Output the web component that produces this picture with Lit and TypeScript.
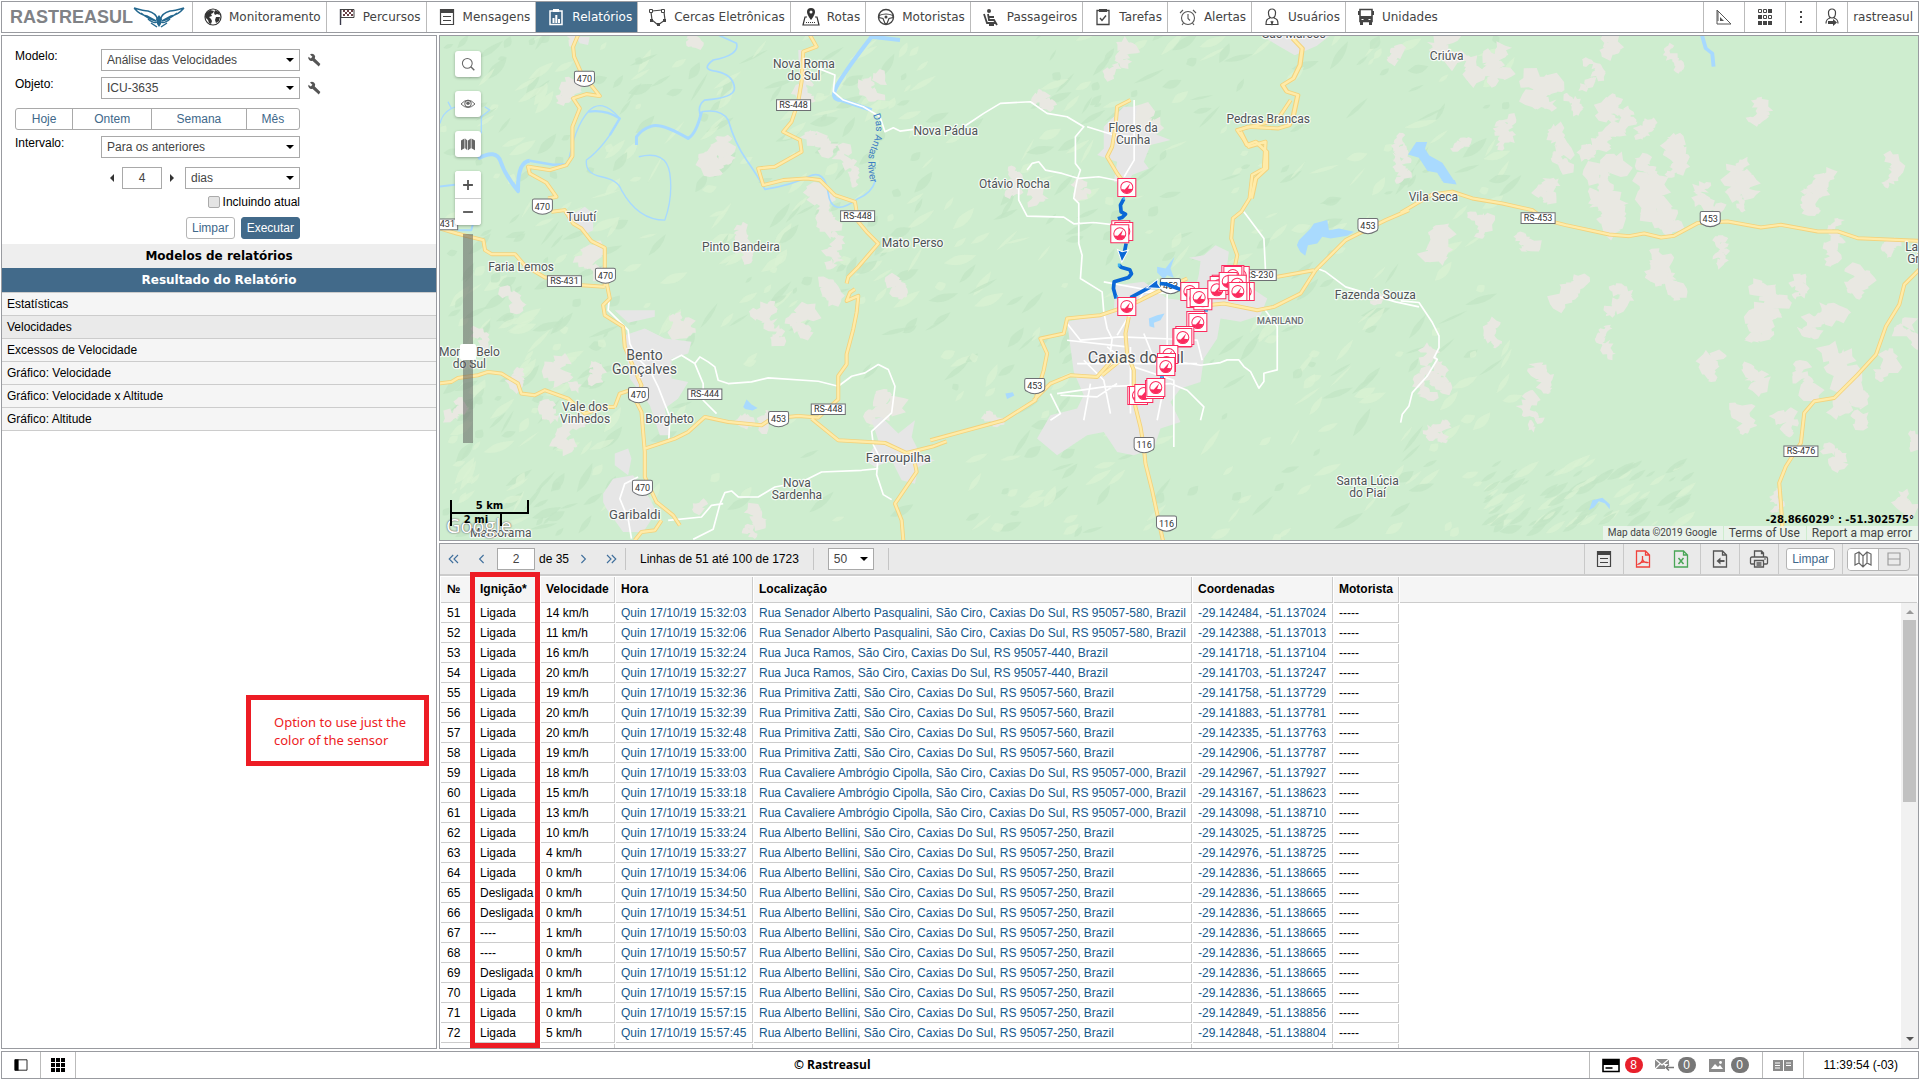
import { LitElement, html, svg, css } from "lit";
import { customElement } from "lit/decorators.js";

/* ---------- data ---------- */

const NAV: [string, string][] = [
  ["globe", "Monitoramento"],
  ["flag", "Percursos"],
  ["list", "Mensagens"],
  ["report", "Relatórios"],
  ["fence", "Cercas Eletrônicas"],
  ["route", "Rotas"],
  ["wheel", "Motoristas"],
  ["seat", "Passageiros"],
  ["task", "Tarefas"],
  ["alarm", "Alertas"],
  ["user", "Usuários"],
  ["bus", "Unidades"],
];

const SENADOR = "Rua Senador Alberto Pasqualini, São Ciro, Caxias Do Sul, RS 95057-580, Brazil";
const JUCA = "Rua Juca Ramos, São Ciro, Caxias Do Sul, RS 95057-440, Brazil";
const ZATTI = "Rua Primitiva Zatti, São Ciro, Caxias Do Sul, RS 95057-560, Brazil";
const CIPOLLA = "Rua Cavaliere Ambrógio Cipolla, São Ciro, Caxias Do Sul, RS 95057-000, Brazil";
const BELLINI = "Rua Alberto Bellini, São Ciro, Caxias Do Sul, RS 95057-250, Brazil";

const ROWS: [number, string, number, string, string, string][] = [
  [51, "Ligada", 14, "15:32:03", SENADOR, "-29.142484, -51.137024"],
  [52, "Ligada", 11, "15:32:06", SENADOR, "-29.142388, -51.137013"],
  [53, "Ligada", 16, "15:32:24", JUCA, "-29.141718, -51.137104"],
  [54, "Ligada", 20, "15:32:27", JUCA, "-29.141703, -51.137247"],
  [55, "Ligada", 19, "15:32:36", ZATTI, "-29.141758, -51.137729"],
  [56, "Ligada", 20, "15:32:39", ZATTI, "-29.141883, -51.137781"],
  [57, "Ligada", 20, "15:32:48", ZATTI, "-29.142335, -51.137763"],
  [58, "Ligada", 19, "15:33:00", ZATTI, "-29.142906, -51.137787"],
  [59, "Ligada", 18, "15:33:03", CIPOLLA, "-29.142967, -51.137927"],
  [60, "Ligada", 15, "15:33:18", CIPOLLA, "-29.143167, -51.138623"],
  [61, "Ligada", 13, "15:33:21", CIPOLLA, "-29.143098, -51.138710"],
  [62, "Ligada", 10, "15:33:24", BELLINI, "-29.143025, -51.138725"],
  [63, "Ligada", 4, "15:33:27", BELLINI, "-29.142976, -51.138725"],
  [64, "Ligada", 0, "15:34:06", BELLINI, "-29.142836, -51.138665"],
  [65, "Desligada", 0, "15:34:50", BELLINI, "-29.142836, -51.138665"],
  [66, "Desligada", 0, "15:34:51", BELLINI, "-29.142836, -51.138665"],
  [67, "----", 1, "15:50:03", BELLINI, "-29.142836, -51.138665"],
  [68, "----", 0, "15:50:57", BELLINI, "-29.142836, -51.138665"],
  [69, "Desligada", 0, "15:51:12", BELLINI, "-29.142836, -51.138665"],
  [70, "Ligada", 1, "15:57:15", BELLINI, "-29.142836, -51.138665"],
  [71, "Ligada", 0, "15:57:15", BELLINI, "-29.142849, -51.138856"],
  [72, "Ligada", 5, "15:57:45", BELLINI, "-29.142848, -51.138804"],
];

const SECTIONS = [
  "Estatísticas",
  "Velocidades",
  "Excessos de Velocidade",
  "Gráfico: Velocidade",
  "Gráfico: Velocidade x Altitude",
  "Gráfico: Altitude",
];

/* ---------- icons ---------- */

const GLYPHS: Record<string, unknown> = {
  globe: svg`<circle cx="10" cy="10" r="8" fill="none" stroke="#333" stroke-width="1.2"/><path d="M3 6l4-3 4 1-1 2-2 1 1 2-3 1 2 2 1 2-1 3-2-1-1-3-3-3zM12 3l4 2 1 3-3-1-2 1-1-2zM13 10l4 0-1 4-3 2-1-3z" fill="#333"/>`,
  flag: svg`<path d="M3.500 2v16" stroke="#3a3a4a" stroke-width="1.400"/><path d="M4 2.500h13v8H4z" fill="#fff" stroke="#444"/><path d="M6 3h2v2H6zM10 3h2v2h-2zM14 3h2v2h-2zM8 5h2v2H8zM12 5h2v2h-2zM6 7h2v2H6zM10 7h2v2h-2zM14 7h2v2h-2z" fill="#6a4046"/>`,
  list: svg`<path d="M3.500 2.500h13v15h-13z" fill="none" stroke="#444" stroke-width="1.200"/><path d="M3 2h14v4H3z" fill="#444"/><path d="M6 9.500h8M6 13.500h8" stroke="#444" stroke-width="1.200"/>`,
  report: svg`<path d="M4 4h12v13.500H4z" fill="none" stroke="#fff" stroke-width="1.500"/><path d="M7 2h6v3H7z" fill="#fff"/><path d="M6.500 11h2v5h-2zM9.300 8h2v8h-2zM12 12h2v4h-2z" fill="#fff"/>`,
  fence: svg`<path d="M4 4l10-1M16 5l1 8-7 5-6-5-1-8" fill="none" stroke="#444" stroke-width="1.200"/><path d="M1.500 2.500h3v3h-3zM13.500 2.500h3v3h-3z" fill="#fff" stroke="#444"/><path d="M2 12h3v3H2zM15 12h3v3h-3zM9 16h3v3H9z" fill="#444"/>`,
  route: svg`<path d="M6 10H4l-2 8h16l-2-8h-2" fill="none" stroke="#333" stroke-width="1.200"/><path d="M10 1a4 4 0 0 1 4 4c0 3-4 8-4 8s-4-5-4-8a4 4 0 0 1 4-4z" fill="#333"/><circle cx="10" cy="5" r="1.500" fill="#fff"/><path d="M5 15.500h10" stroke="#333" stroke-dasharray="1 1"/>`,
  wheel: svg`<circle cx="10" cy="10" r="7.500" fill="none" stroke="#444" stroke-width="1.400"/><path d="M3 8.500q7-3 14 0v2l-4 1-2 5H9l-2-5-4-1z" fill="none" stroke="#444" stroke-width="1.200"/><circle cx="10" cy="10" r="1.500" fill="#444"/>`,
  seat: svg`<circle cx="8" cy="4" r="2" fill="#444"/><path d="M3 7l3 9h8M7 7l1 6h5l3 5M8 10l5 0M8 18h5" fill="none" stroke="#444" stroke-width="1.800"/>`,
  task: svg`<path d="M4 3.500h12v14H4z" fill="none" stroke="#444" stroke-width="1.300"/><path d="M6 2h8v3H6z" fill="#444"/><path d="M7 11l2 2.500 4-5" fill="none" stroke="#444" stroke-width="1.400"/>`,
  alarm: svg`<circle cx="10" cy="11" r="6.500" fill="none" stroke="#555" stroke-width="1.100"/><path d="M10 7v4.500l2 2M2 6l3-3M18 6l-3-3M5.500 16l-1.500 2M14.500 16l1.500 2" fill="none" stroke="#555" stroke-width="1.100"/>`,
  user: svg`<path d="M10 2a3.500 3.500 0 0 1 3.500 4c0 3-1.500 5-3.500 5S6.500 9 6.500 6A3.500 3.500 0 0 1 10 2zM8 11c-3 1-4 2-4 6.500h12c0-4.500-1-5.500-4-6.500M9 14l1 3 1-3" fill="none" stroke="#444" stroke-width="1.200"/>`,
  bus: svg`<path d="M4 2.500h12v12H4z" fill="#fff" stroke="#444" stroke-width="1.600"/><path d="M4 9h12v6H4z" fill="#444"/><path d="M4 15h3v3H4zM13 15h3v3h-3zM2 4h2v4H2zM16 4h2v4h-2z" fill="#444"/><path d="M5.500 12h2v1h-2zM12.500 12h2v1h-2z" fill="#fff"/>`,
  ruler: svg`<path d="M3 3v14h14z" fill="none" stroke="#555"/><path d="M6 10v4h4z" fill="#555"/><path d="M3 5h2M3 7h2M3 9h2M3 11h2M3 13h2" stroke="#555"/>`,
  apps: svg`<path d="M13 2h4v4h-4zM3 8h4v4H3zM3 14h4v4H3zM8 14h4v4H8zM13 14h4v4h-4z" fill="#444"/><path d="M3.500 2.500h3v3h-3zM8.500 2.500h3v3h-3zM8.500 8.500h3v3h-3zM13.500 8.500h3v3h-3z" fill="#fff" stroke="#444"/>`,
  dots: svg`<path d="M9 4h2v2H9zM9 9h2v2H9zM9 14h2v2H9z" fill="#444"/>`,
  login: svg`<path d="M10 2a3.500 3.500 0 0 1 3.500 4c0 3-1.500 5-3.500 5S6.500 9 6.500 6A3.500 3.500 0 0 1 10 2zM8 11c-3 1-4 2-4 5.500M12 11c3 1 4 2 4 5.500" fill="none" stroke="#444" stroke-width="1.200"/><path d="M6 14h5v-2l4 3.500-4 3.500v-2H6z" fill="#444"/>`,
  wrench: svg`<path d="M5 3a4 4 0 0 1 6 5l7 7-2 3-8-7a4 4 0 0 1-5-5l3 2 2-2z" fill="#555"/>`,
  search: svg`<circle cx="9" cy="9" r="7" fill="none" stroke="#666" stroke-width="1.500"/><path d="M14 14l5 5" stroke="#666" stroke-width="2"/>`,
  eye: svg`<path d="M0 10q10-11 20 0-10 10-20 0z" fill="none" stroke="#666" stroke-width="1.400"/><circle cx="10" cy="9.500" r="4.500" fill="none" stroke="#666" stroke-width="1.500"/><circle cx="10" cy="9" r="2.500" fill="#666"/>`,
  map: svg`<path d="M0 5l5-3v14l-5 3zM6 2l3 3v14l-3-3zM10 5l4-3v14l-4 3zM15 2l5 3v14l-5-3z" fill="#666"/>`,
  plus: svg`<path d="M10 3v14M3 10h14" stroke="#555" stroke-width="2.600"/>`,
  minus: svg`<path d="M3 10h14" stroke="#555" stroke-width="2.600"/>`,
  first: svg`<path d="M9 5l-5 5 5 5M15 5l-5 5 5 5" fill="none" stroke="#3f6f9c" stroke-width="1.400"/>`,
  prev: svg`<path d="M12 5l-5 5 5 5" fill="none" stroke="#3f6f9c" stroke-width="1.400"/>`,
  next: svg`<path d="M8 5l5 5-5 5" fill="none" stroke="#3f6f9c" stroke-width="1.400"/>`,
  last: svg`<path d="M5 5l5 5-5 5M11 5l5 5-5 5" fill="none" stroke="#3f6f9c" stroke-width="1.400"/>`,
  pdf: svg`<path d="M3.500 2h9l4 4v12h-13zM12.500 2v4h4" fill="none" stroke="#f0413c" stroke-width="1.300"/><path d="M9.500 7v3c0 2 3 4 5 3.500-3-1.500-6-.5-9 1.500 2 0 4-3 4-5" fill="none" stroke="#f0413c" stroke-width="1.300"/>`,
  excel: svg`<path d="M3.500 2h9l4 4v12h-13zM12.500 2v4h4" fill="none" stroke="#4aa657" stroke-width="1.300"/><path d="M7.500 9l5 6M12.500 9l-5 6" stroke="#4aa657" stroke-width="1.500"/>`,
  export: svg`<path d="M3.500 2h9l4 4v12h-13zM12.500 2v4h4" fill="none" stroke="#555" stroke-width="1.300"/><path d="M6.500 12l4-3.500v2.500h4v2h-4v2.500z" fill="#555"/>`,
  print: svg`<path d="M5.500 8V2h7l2 2v4M12.500 2v2.500h2M5 15H2.500q-1 0-1-1V9.500q0-1.500 1.500-1.500h14q1.500 0 1.500 1.500V14q0 1-1 1H15M5.500 11.500h9v6.500h-9zM7.500 14h5M7.500 16h5" fill="none" stroke="#555" stroke-width="1.300"/><path d="M15 9.500h2v1h-2z" fill="#555"/>`,
  mapline: svg`<path d="M2 5l4-2 4 4 4-4 4 2v11l-4-2-4 4-4-4-4 2zM6 3v11M10 7v11M14 3v11" fill="none" stroke="#666" stroke-width="1.200"/>`,
  split: svg`<path d="M2.500 2.500h15v15h-15zM2.500 10h15" fill="none" stroke="#999" stroke-width="1.400"/>`,
  panel: svg`<path d="M2.500 3.500h15v13h-15z" fill="#fff" stroke="#222" stroke-width="1.200"/><path d="M2 3h5v14H2z" fill="#000"/>`,
  grid: svg`<path d="M3 3h4v4H3zM8 3h4v4H8zM13 3h4v4h-4zM3 8h4v4H3zM8 8h4v4H8zM13 8h4v4h-4zM3 13h4v4H3zM8 13h4v4H8zM13 13h4v4h-4z" fill="#000"/>`,
  card: svg`<path d="M2 4.500h16v12H2z" fill="#fff" stroke="#000" stroke-width="1.600"/><path d="M2 4h16v6H2z" fill="#000"/><path d="M4.500 13h7" stroke="#000" stroke-width="1.600"/>`,
  mail: svg`<path d="M1 4h14v10H1z" fill="#8a8a8a"/><path d="M1 4l7 6 7-6M1 14l5-5M15 14l-5-5" fill="none" stroke="#fff" stroke-width="1.200"/><path d="M11 9h9v7h-9z" fill="#fff"/><path d="M20 12.500h-8M15 9.500l-3 3 3 3" fill="none" stroke="#777" stroke-width="1.500"/>`,
  image: svg`<path d="M2 4h16v13H2z" fill="#8a8a8a"/><path d="M4 14l4-5 3 3 2-2 3 4z" fill="#fff"/><circle cx="13.500" cy="7.500" r="1.400" fill="#fff"/>`,
  cols: svg`<path d="M0 5h10v11H0z" fill="#8a8a8a"/><path d="M11 5h9v11h-9z" fill="#8a8a8a"/><path d="M2 8h5M2 10.500h5M2 13h5M13 8h5M13 10.500h5" stroke="#fff"/>`,
};

const icon = (name: string, cls = "icon") =>
  html`<svg class=${cls} viewBox="0 0 20 20" aria-hidden="true">${GLYPHS[name]}</svg>`;

/* ---------- map drawing: one unit is a third of a pixel ---------- */

function random(seed: number) {
  let s = seed;
  return () => {
    s = (s * 1664525 + 1013904223) % 4294967296;
    return s / 4294967296;
  };
}

/* Ragged clearing around a centre given in window pixels: a chain of small
   irregular lobes that wander across the area. */
function patch(x: number, y: number, rx: number, ry: number, seed: number) {
  const next = random(seed * 7919 + 13);
  for (let i = 0; i < 5; i++) next();
  let d = "";
  const lobes = Math.max(4, Math.round((rx + ry) / 3.6));
  let ox = (next() - 0.5) * rx;
  let oy = -ry * 0.8;
  for (let j = 0; j < lobes; j++) {
    const n = 9;
    const size = 3 + next() * Math.min(rx, ry) * 0.38;
    for (let i = 0; i < n; i++) {
      const a = (i / n) * Math.PI * 2 + next() * 0.6;
      const k = size * (0.45 + next() * 1.05);
      const px = Math.round((x - 440 + ox + Math.cos(a) * k * 1.2) * 3);
      const py = Math.round((y - 36 + oy + Math.sin(a) * k) * 3);
      d += (i ? "L" : "M") + px + " " + py;
    }
    d += "Z";
    ox = Math.max(-rx, Math.min(rx, ox + (next() - 0.5) * size * 3.4));
    oy += (ry * 1.7) / lobes;
  }
  return d;
}

const CLEARINGS: number[][] = [
  [1450, 55, 22, 30], [1500, 65, 12, 20], [1527, 92, 28, 18], [1560, 105, 16, 10], [1600, 46, 20, 9], [1672, 60, 6, 16],
  [1590, 76, 8, 18], [1615, 108, 26, 14], [1628, 122, 18, 12], [1510, 135, 10, 18], [1460, 145, 16, 6], [1550, 148, 18, 22],
  [1605, 142, 22, 14], [1652, 130, 14, 10], [1680, 158, 16, 22], [1405, 165, 8, 22], [1610, 175, 18, 18], [1642, 170, 12, 14],
  [1740, 178, 16, 20], [1822, 184, 18, 12], [1885, 172, 10, 18], [1762, 112, 10, 14], [1450, 244, 18, 20], [1476, 225, 20, 12],
  [1522, 243, 18, 9], [1552, 192, 20, 12], [1588, 212, 24, 22], [1640, 205, 26, 28], [1662, 222, 18, 16], [1710, 200, 12, 18],
  [1745, 195, 12, 20], [1828, 200, 24, 14], [1838, 242, 9, 26], [1856, 284, 22, 14], [1892, 248, 18, 8], [1575, 292, 20, 14],
  [1604, 300, 20, 16], [1640, 266, 30, 14], [1662, 286, 14, 16], [1724, 252, 7, 18], [1760, 302, 22, 18], [1753, 326, 22, 18],
  [1800, 288, 10, 12], [1820, 322, 26, 16], [1818, 372, 30, 26], [1794, 380, 16, 18], [1726, 366, 18, 14], [1750, 380, 12, 16],
  [1495, 335, 14, 14], [1607, 342, 8, 18], [1535, 378, 11, 16], [1528, 414, 10, 20], [1440, 432, 18, 11], [1727, 420, 18, 16],
  [1855, 402, 24, 13], [1862, 420, 14, 8], [1790, 424, 16, 12], [1828, 456, 12, 14], [1888, 368, 12, 16], [1905, 335, 12, 14],
  [1907, 440, 10, 9], [1898, 504, 12, 12], [1779, 502, 5, 14], [1430, 380, 14, 12], [1378, 300, 8, 6], [1400, 150, 6, 16],
  [582, 38, 10, 8], [568, 92, 14, 12], [720, 155, 14, 20], [724, 165, 12, 8], [888, 88, 24, 14], [814, 144, 14, 12],
  [846, 168, 8, 22], [812, 210, 16, 24], [828, 245, 10, 26], [740, 246, 8, 22], [805, 92, 10, 12], [882, 288, 20, 10],
  [700, 40, 18, 6], [605, 262, 20, 16], [510, 302, 10, 12], [520, 378, 12, 10], [562, 374, 14, 18], [592, 374, 10, 12],
  [540, 412, 22, 10], [575, 434, 16, 18], [765, 324, 14, 22], [808, 322, 16, 16], [830, 292, 14, 12], [680, 325, 14, 12],
  [477, 343, 8, 14], [458, 410, 12, 12], [880, 406, 16, 16], [748, 524, 10, 16], [1006, 183, 12, 16], [1085, 190, 12, 10],
  [1043, 194, 14, 10], [1428, 365, 14, 20], [1420, 388, 8, 12], [1145, 125, 20, 18], [1120, 60, 12, 20], [1035, 102, 14, 8],
  [765, 421, 8, 10], [705, 508, 8, 6], [750, 422, 16, 6], [990, 420, 14, 6], [1400, 55, 12, 8],
];

/* Soft hill shading spread over the western two thirds. */
const RELIEF = (() => {
  const next = random(42);
  const out: { d: string; dark: boolean }[] = [];
  for (let i = 0; i < 820; i++) {
    const u = next();
    const x = Math.round(4431 * Math.pow(u, 1.25) * 0.72);
    const y = Math.round(next() * 1512);
    if (y > 900 && x > 500 && x < 1500 && next() < 0.8) continue;
    const l = 22 + next() * 80;
    const w = 8 + next() * 26;
    const a = -0.2 - next() * 0.9;
    const cx = Math.cos(a);
    const sy = Math.sin(a);
    const p = (m: number, n: number) => `${Math.round(x + cx * m - sy * n)} ${Math.round(y + sy * m + cx * n)}`;
    out.push({ d: `M${p(0, 0)}Q${p(l / 2, w)} ${p(l, 0)}Q${p(l / 2, -w / 2)} ${p(l / 3, -w / 3)}Z`, dark: next() > 0.5 });
  }
  for (let i = 0; i < 90; i++) {
    const x = Math.round(3120 + next() * 600);
    const y = Math.round(1290 + next() * 210);
    const l = 20 + next() * 60;
    out.push({ d: `M${x} ${y}q${Math.round(l / 3)} ${-Math.round(l / 2)} ${Math.round(l)} ${-Math.round(l / 1.5)}q${-Math.round(l / 3)} ${Math.round(l / 1.5)} ${-Math.round(l)} ${Math.round(l / 1.5)}z`, dark: next() > 0.45 });
  }
  return out;
})();

/* Map tiles share one drawing scale and differ by origin. */
const NW = "translate(-6 -18)";
const SW = "translate(-6 732)";
const MID = "translate(1470 192)";
const EAST = "translate(2880 432)";
const NE = "translate(2400 -108) scale(1.301 1)";

const RIVERS: [string, string, number][] = [
  [NW, "M6 280Q14 240 60 228M30 215l10 20M130 310V260l25-20-15-10M390 400Q410 290 450 245T545 265Q500 350 445 390Q440 430 490 440T550 480Q600 570 680 570Q705 500 695 430T602 380", 4],
  [NW, "M450 245q50-8 95 20l-30 50", 7],
  [NW, "M120 385Q175 355 188 395T240 483Q238 395 275 392", 12],
  [NW, "M275 392L345 404 390 402", 7],
  [NW, "M790 245Q850 235 870 270Q890 340 925 390T980 478Q1060 465 1110 440T1170 490T1260 505Q1300 490 1312 450", 5],
  [NW, "M595 345V320Q610 298 640 288T750 325Q775 310 790 245", 9],
  [NW, "M840 15l55 25q10 35-70 50-40 30 10 34 50 10 54 50 0 30-90 36-25 20-10 50", 5],
  [NW, "M1385 30l-85-10Q1230 110 1200 160T1210 210L1300 240", 12],
  [NW, "M0 470l50-6M60 600l40 0 5-20", 6],
  [NE, "M1062 100l10 45 15 15 3 40", 9],
];

const LAKES: [string, string][] = [
  [NE, "M405 426l25 0-5 20 10 20 30 22 15 30 18 35-30-5-15-30-22-5-20-40-25-10z"],
  [MID, "M1105 420l35-35 10-15 40-10 5 30 30-5 45 10-20 12-50 8-25-5-15 20-28 5-8 32-15-12-10-20z"],
  [MID, "M680 500l25 5 27-35-12 35 10 28-20-8-10 12-20-20zM655 655l25-10 22-5-12 20-20 8 2 15-15-5zM225 880l22-4 5 10-22 10z"],
  [SW, "M915 380l10-22 15 15 18 10-15 8-22-5z"],
  [EAST, "M575 960l30-8 22 20 0 15-15-18-18-6-14 18-15 8zM120 0l42 0 5 12-20-5z"],
];

const URBAN: [string, string][] = [
  [MID, "M410 665l140-30 5-80 85-10 70 50 75 8 20-80 5-40-35-10 45-8 35-30 40 20-5 40 60 60 60 40-20 50-60 20-60-10-10 60-40 60-10 70-60 20-30 40 30 60-60 20-20 60-60 20-50-10-40-60-50 10-90 60-60-50 40-70 80-20 20-40-30-70z"],
  [MID, "M520 80l60-60 40 0-10 60 60 20 50 20-60 15-20 50 15 20-50 20-15 30-40-10 10-60-60-20 20-20z"],
  [SW, "M495 640l30-45 60-10 30 40 20 30 20 40-40 60h-60l-50-70-10-20zM560 165l60-20 60 30 80 10-10 35-50 15 0 60 50 10-30 50-40 30 15 80-30 0-30-90-60-80zM530 90l120 0 0 20-80 18zM1280 540l40-60-20-60 30-10 50 50 50-40-10 50 30 60 40 10-50 20-10 50-40-10-30-60-50 20zM530 520l40-15 10 30-10 50-40-30z"],
  [NE, "M50 108l155 0-30 30-50 28-40-30z"],
  [NW, "M390 560l50-30 25 20 0 50-20 10-30-30zM415 20l40 0-5 25-25-5zM1080 60l20 0 5 140-20-20z"],
];

const WHITE: [string, string][] = [
  [MID, "M100 80l60-40 50-30 90-5 50 35 60 10 50 30-25 30 0 80 15 20-10 30-5 25-5 30 15 15 0 120 10 35-5 70 65 40 5 60 10 50 15 30-5 40M470 80l80 25 60 5M611 0v180l-30 50M265 250l0 50 25 48 110 3 30 20 60-4 70 8M290 210l15-20 20-5 20 25 50 10 50 15 60-5 60 12M520 545l190 35v200M410 670l40 50 120-10 120 5 110 5 15 60M560 705l80-130 80 5M710 780l100 15 60-8 20-8 35 0 15 20 20 15 25 50 15-20 0-25 40-10 0-130-40-55M460 780l60 60 20 100M480 850l-20 110M360 880l30 60-30 20M380 880l140-20 200-10 50 20 50 50-10 40M530 740l80 60 120 40 0 200M940 335l60 80 5 100M1160 505l25 10 60 45 150 45 70 15M410 720l180 20M600 740l0 200M700 860l-20 100M440 790l150 0 210 0M560 850l-60 40-110-5M640 700l60 150"],
  [SW, "M515 45l-5 45 60 60 5 40 20 40 40 40 25 50 35 90-3 70M700 240l30-15 40 25 25 60 0 50 40 40M770 250l15-20 25 15 20 15 10 40 30 10 70-5 50-12 150 10 60 15 40-30 40-10 40-25 30 15 20 50-10 80-60 55 5 40 15 30-5 60 20 60 25 15M1320 565l-50 5-120 5-60 30-80 15-50 30-60 0-20-18-20 5-15 35-20 75-60 30M690 720l100-10 30-35 35-5M600 590l-40 20-15 45 25 60 10 60"],
  [EAST, "M0 362l55 5 40 60 20 40 0 35-15 30 10 5-30 50-45 50-10 40-20 25-5 25"],
  [NW, "M1140 115l50 20-5 50 30 25 60 20 50 30 15 45 25-12 20 10 40-5"],
];

const YELLOW: [string, string][] = [
  [NW, "M420 15L405 50 408 80 430 130 485 198 445 192 405 205 425 235 403 290 403 378 385 405 335 420 270 410 275 430 325 458 355 500 330 505"],
  [NW, "M340 545l40-5 25 40 25 15 30 38 40 20 0 115M6 595l50 15 80 20 5 30 20 12 70 0 30 35 60 35 50 0M430 765l70 5"],
  [NW, "M1115 15l20 35-40 15-5 90-10 60-20 60-25 30 50 25 5 35-80 45-50 5 15 50 60-15 70-5 40 5 45 45 60 20 10 60 25 30 35 35-60 70-30 30-5 20"],
  [SW, "M505 5l10 50-20 20 5 30 55 35 5 60 30 70 20 45-15 50 15 30 10 120 0 75 35 75 50 40 20 30M530 380l15-40 30-10 25 10M530 380l-30 0-60 20-50-45-70-25-30 15-40-5-10-30-50-30-40-5-30 10-60 8-20 12-40 5M620 505l90-30 40-20 50-45 70 15 100 10 30-20 80-8 60 5 60-55 0-70 25-35 0-30 20-75 10-50 5-50-35 15 10-25 15-10M1120 415l80 65 140 8 65 30 80-20 40-15M1430 550l5 25-65 95 20 50 5 60M590 780l20-25 40-5 20-30"],
  [MID, "M600 0l-40 20-5 60-10 60-15 30 30 50 15 20M0 1020l220-60 95-60 10-40 15-50 10-50-20-45 70-15 10-45 100-10 90-30 80-40 90-40M310 900l50-50 60-25 80 5 40-45 60-20M1080 0l-40 60-120 30 35 50 50-15-5 80-35 20-8 70-25 40-25 20-5 60 18 50-8 40 5 30M830 615l50-5 100 20 50-10 80-40 45-70 90-90 80-40 40-20 70-30M1040 530l110-20M595 650l-10 50 5 60 20 50 0 60 5 50 15 60 10 60 5 50 20 80 30 140 20 80M595 760l-80 65"],
  [EAST, "M0 98l60-35 35-20 60-8 60 20 90 15 90 20 40 30 60 15 130 28 60 5 45-8 50 12 40-5 70-38 90-5 100 18 60-8 110 20 60 0 60 20 180 8 35 15M1555 268l-45 45-15 60-40 65-30 85-55 60-70 70-60 10-30 35-10 90-45 70-20 50 5 60 5 80"],
  [NE, "M120 115l22 30-5 50-15 40-25 20 10 20 25 10-10 60-10 30-25 10-70-5-20 10M0 395l15 40 20-10 25 30 0 50-25 30-10 60"],
];

const SHIELDS: [number, number, string][] = [
  [433, 128, "470"], [307, 511, "470"], [496, 718, "470"], [595, 1076, "470"], [607, 1354, "470"],
  [1015, 1148, "453"], [2782, 569, "453"], [1783, 1049, "453"], [2190, 749, "453"], [3808, 548, "453"],
  [2111, 1226, "116"], [2178, 1461, "116"],
];

const PLATES: [number, number, string][] = [
  [1060, 207, "RS-448"], [1252, 540, "RS-448"], [373, 735, "RS-431"], [794, 1074, "RS-444"], [1164, 1119, "RS-448"],
  [2456, 717, "RS-230"], [3292, 546, "RS-453"], [4080, 1245, "RS-476"], [2, 565, "RS-431"],
];

const PLACES: [number, number, string, number][] = [
  [1091, 97, "Nova Roma", 36], [1091, 133, "do Sul", 36], [424, 555, "Tuiutí", 36], [902, 645, "Pinto Bandeira", 36],
  [243, 706, "Faria Lemos", 36], [1516, 298, "Nova Pádua", 36], [1417, 634, "Mato Perso", 36],
  [88, 958, "Monte Belo", 36], [88, 994, "do Sul", 36], [613, 970, "Bento", 42], [613, 1012, "Gonçalves", 42],
  [435, 1124, "Vale dos", 36], [435, 1160, "Vinhedos", 36], [688, 1160, "Borgheto", 36], [1374, 1277, "Farroupilha", 39],
  [1070, 1352, "Nova", 36], [1070, 1388, "Sardenha", 36], [584, 1447, "Garibaldi", 39], [182, 1501, "Marcorama", 36],
  [2078, 287, "Flores da", 36], [2078, 323, "Cunha", 36], [2483, 260, "Pedras Brancas", 36], [1722, 455, "Otávio Rocha", 36],
  [2804, 789, "Fazenda Souza", 36], [2086, 980, "Caxias do Sul", 48], [3018, 71, "Criúva", 36], [2978, 496, "Vila Seca", 36],
  [2781, 1345, "Santa Lúcia", 36], [2781, 1381, "do Piaí", 36], [2560, 5, "São Marcos", 36], [4456, 646, "Lajeado", 36], [4456, 682, "Grande", 36],
];

const MARKERS: [number, number][] = [
  [589, 262], [571, 389], [580, 394], [568, 401], [589, 619],
  [778, 574], [796, 595], [817, 602], [806, 592],
  [872, 552], [866, 556], [859, 569], [929, 526], [913, 523], [901, 523], [907, 526], [893, 544],
  [920, 552], [944, 574], [930, 574], [922, 574],
  [796, 661], [802, 667], [763, 706], [754, 713], [757, 712], [715, 763], [708, 787], [706, 799],
  [619, 886], [624, 886], [640, 880], [672, 868], [676, 862],
];

const mapDrawing = svg`
  <rect width="4431" height="1512" fill="#ceedcf"/>
  ${RELIEF.map((r) => svg`<path d=${r.d} fill=${r.dark ? "#c2e4c4" : "#daf2d3"} opacity=".75"/>`)}
  ${CLEARINGS.map((c, i) => svg`<path d=${patch(c[0], c[1], c[2], c[3], i + 1)} fill="#e9e8e2"/>`)}
  ${URBAN.map((u) => svg`<path transform=${u[0]} d=${u[1]} fill="#e6e6e6"/>`)}
  ${RIVERS.map((r) => svg`<path transform=${r[0]} d=${r[1]} fill="none" stroke="#a7d9ff" stroke-width=${r[2]} stroke-linejoin="round"/>`)}
  ${LAKES.map((l) => svg`<path transform=${l[0]} d=${l[1]} fill="#a9dafe"/>`)}
  ${WHITE.map((w) => svg`<path transform=${w[0]} d=${w[1]} fill="none" stroke="#fff" stroke-width="5" stroke-linejoin="round"/>`)}
  ${YELLOW.map((y) => svg`<path transform=${y[0]} d=${y[1]} fill="none" stroke="#f3d27c" stroke-width="12" stroke-linejoin="round"/>`)}
  ${YELLOW.map((y) => svg`<path transform=${y[0]} d=${y[1]} fill="none" stroke="#ffeba8" stroke-width="7" stroke-linejoin="round"/>`)}
  ${SHIELDS.map(
    (s) => svg`<g transform="translate(${s[0]} ${s[1]})">
      <path d="M-30-17q0-5 5-5h50q5 0 5 5v25q0 6-8 9Q0 30-22 17q-8-3-8-9z" fill="#fff" stroke="#6d6f73" stroke-width="3"/>
      <text class="sign" y="10">${s[2]}</text></g>`
  )}
  ${PLATES.map(
    (p) => svg`<g transform="translate(${p[0]} ${p[1]})">
      <path d="M-51-16H51V16H-51z" fill="#fff" stroke="#6d6f73" stroke-width="3"/>
      <text class="sign" y="9">${p[2]}</text></g>`
  )}
  ${PLACES.map((p) => svg`<text class="place" x=${p[0]} y=${p[1]} font-size=${p[3]}>${p[2]}</text>`)}
  <text class="place suburb" x="2519" y="863" font-size="28">MARILAND</text>
  <path id="river" d="M1298 236Q1318 280 1294 330T1302 480" fill="none"/>
  <text class="river"><textPath href="#river">Das Antas River</textPath></text>
  <g transform=${MID}>
    <path d="M580 296L570 315 572 335 585 342 575 352 562 356M587 430L582 456M566 495l6 6 26 8 5 12-9 11-43 13-2 20 8 30M600 592l60-32M688 550l20 2 42 16M693 828l3 8M826 628v6" fill="none" stroke="#0a68d6" stroke-width="11" stroke-linejoin="round"/>
    <path d="M577 294h6M562 495h8M558 590h4M690 830h8M823 630h8" stroke="#42b4f0" stroke-width="10"/>
    <path d="M574 486l-13-38 14 7 19-5z" fill="#0a68d6" stroke="#fff" stroke-width="3"/>
    <path d="M648 563l34-26 0 14 10 14z" fill="#0a68d6" stroke="#fff" stroke-width="3"/>
    ${MARKERS.map(
      (m) => svg`<g transform="translate(${m[0]} ${m[1]})">
        <path d="M-27-27H27V27H-27z" fill="#fff" stroke="#fb2b5e" stroke-width="3"/>
        <circle r="18" fill="#fff" stroke="#fb2b5e" stroke-width="3"/>
        <path d="M-17 5L-6 6 10-12 4 4 17 5A18 18 0 0 1-17 5z" fill="#fb2b5e"/></g>`
    )}
  </g>`;

/* ---------- component ---------- */

@customElement("app-root")
export class AppRoot extends LitElement {
  static styles = css`
    :host {
      display: flex;
      flex-direction: column;
      gap: 2px;
      height: 100vh;
      padding: 1px;
      box-sizing: border-box;
      background: #fff;
      color: #000;
      font: 12px/14px "Liberation Sans", Arial, sans-serif;
      overflow: hidden;
      position: relative;
    }
    * { box-sizing: border-box; }
    button, input, select { font: inherit; color: inherit; margin: 0; }
    button { cursor: pointer; padding: 0; background: none; border: 0; }
    .icon { width: 20px; height: 20px; flex: none; display: block; }
    .small { width: 16px; height: 16px; flex: none; display: block; }

    .top { display: flex; height: 32px; border: 1px solid #999ba0; font: 12px/30px "DejaVu Sans", Verdana, sans-serif; }
    .brand { display: flex; align-items: center; width: 191px; padding-left: 8px; border-right: 1px solid #bbb; font: bold 18px/30px "Liberation Sans", Arial, sans-serif; color: #808286; }
    .bird { width: 52px; height: 24px; flex: none; }
    .nav { display: flex; flex: 1; }
    .nav a { display: flex; align-items: center; gap: 6px; padding: 0 5px 0 10px; color: #444; text-decoration: none; border-right: 1px solid #bbb; white-space: nowrap; }
    .nav a:last-child { border-right: 0; }
    .nav .current { background: #426a8a; color: #fff; }
    .tools { display: flex; color: #444; }
    .tools button { display: flex; align-items: center; justify-content: center; width: 41px; border-left: 1px solid #bbb; }
    .tools .narrow { width: 31px; }
    .tools .account { width: auto; padding: 0 5px; }

    .main { flex: 1; display: flex; gap: 2px; min-height: 0; }
    .side { width: 436px; flex: none; border: 1px solid #999ba0; }
    .form { display: grid; grid-template-columns: 86px 199px 16px; column-gap: 0; row-gap: 6px; padding: 13px 13px 5px; align-items: start; }
    .form .small { margin: 3px 0 0 6px; }
    .tool { display: block; }
    .pick { display: grid; position: relative; height: 22px; }
    .pick select { appearance: none; border: 1px solid #a9a9a9; background: #fff; border-radius: 0; padding: 0 20px 0 5px; color: #444; width: 100%; }
    .pick::after { content: ""; position: absolute; right: 6px; top: 9px; border: 4px solid transparent; border-top-color: #000; border-bottom: 0; pointer-events: none; }
    .presets { grid-column: 1 / 3; display: flex; margin: 3px 0 0; border: 1px solid #a9a9a9; border-radius: 3px; height: 22px; }
    .presets button { flex: 79 1 0; color: #40688a; border-left: 1px solid #a9a9a9; }
    .presets button:nth-child(1) { flex-grow: 57; border-left: 0; }
    .presets button:nth-child(3) { flex-grow: 95; }
    .presets button:nth-child(4) { flex-grow: 53; }
    .count { grid-column: 1 / 3; display: flex; justify-content: flex-end; align-items: center; gap: 8px; padding-top: 3px; }
    .count .pick { width: 115px; margin-left: 3px; }
    .number { width: 40px; height: 22px; border: 1px solid #a9a9a9; text-align: center; color: #444; padding: 0; }
    .arrow { border: 4px solid transparent; width: 8px; height: 8px; }
    .arrow.back { border-right-color: #333; border-left: 0; width: 4px; }
    .arrow.forth { border-left-color: #333; border-right: 0; width: 4px; }
    .check { grid-column: 1 / 3; display: flex; justify-content: flex-end; align-items: center; gap: 3px; height: 14px; }
    .check input { appearance: none; width: 12px; height: 12px; border: 1px solid #aaa; border-radius: 2px; background: #e4e4e4; }
    .actions { grid-column: 1 / 3; display: flex; justify-content: flex-end; gap: 6px; padding-top: 2px; }
    .btn { height: 22px; padding: 0 5px; border: 1px solid #b5b5b5; border-radius: 3px; background: #fff; color: #40688a; }
    .btn.go { background: #426a8a; border-color: #426a8a; color: #fff; }
    .side h2 { margin: 0; height: 24px; text-align: center; font: bold 12px/24px "DejaVu Sans", Verdana, sans-serif; background: #eee; }
    .side h2.on { background: #426a8a; color: #fff; }
    .sections { list-style: none; margin: 0; padding: 0; border-top: 1px solid #ccc; }
    .sections button { display: block; width: 100%; height: 23px; padding: 0 5px; text-align: left; background: #f5f5f5; border-bottom: 1px solid #ccc; }
    .sections .on { background: #eaeaea; }

    .work { flex: 1; min-width: 0; display: grid; grid-template-rows: 1fr 1fr; gap: 2px; }
    .map { position: relative; border: 1px solid #999ba0; overflow: hidden; }
    .canvas { display: block; width: 100%; height: 100%; }
    .place { font-family: Roboto, sans-serif; fill: #4f5356; text-anchor: middle; paint-order: stroke; stroke: #fff; stroke-opacity: .8; stroke-width: 7px; stroke-linejoin: round; }
    .suburb { font-weight: 500; fill: #6a7075; }
    .sign { font: 27px Roboto, sans-serif; fill: #333; text-anchor: middle; }
    .river { font: 30px Roboto, sans-serif; fill: #3d7dc4; }
    .controls { position: absolute; left: 15px; top: 15px; display: flex; flex-direction: column; align-items: center; gap: 14px; }
    .controls button { width: 26px; height: 26px; display: grid; place-items: center; background: #fff; border-radius: 3px; box-shadow: 0 1px 3px rgba(0, 0, 0, .3); }
    .zoom { border-radius: 3px; box-shadow: 0 1px 3px rgba(0, 0, 0, .3); background: #fff; }
    .controls .zoom button { box-shadow: none; height: 27px; }
    .controls .zoom button + button { border-top: 1px solid #ccc; border-radius: 0 0 3px 3px; }
    .controls .small { width: 14px; height: 14px; }
    .slider { appearance: none; writing-mode: vertical-lr; direction: rtl; width: 16px; height: 209px; margin: -5px 0 0; background: linear-gradient(90deg, transparent 3px, rgba(85, 85, 85, .5) 3px, rgba(85, 85, 85, .5) 13px, transparent 13px); }
    .slider::-webkit-slider-thumb { appearance: none; width: 16px; height: 16px; background: #fff; border-radius: 2px; }
    .scale { position: absolute; left: 10px; bottom: 14px; font: bold 10px/12px "DejaVu Sans", Verdana, sans-serif; text-align: center; }
    .km { width: 79px; height: 14px; border: 2px solid #000; border-top: 0; }
    .mi { width: 52px; height: 12px; border: 2px solid #000; border-top: 0; border-bottom: 0; }
    .maker { position: absolute; left: 6px; bottom: 0; font: 500 20px/28px "Open Sans", sans-serif; color: #fff; text-shadow: 0 0 1px #555, 0 0 2px #777; }
    .coords { position: absolute; right: 4px; bottom: 14px; font: bold 10px/12px "DejaVu Sans", Verdana, sans-serif; }
    .legal { position: absolute; right: 0; bottom: 0; display: flex; gap: 1px; font: 12px/14px Roboto, sans-serif; color: #444; }
    .legal > * { background: rgba(245, 245, 245, .7); padding: 0 6px 0 5px; color: #444; text-decoration: none; }
    .legal span { font-size: 10px; }

    .report { display: flex; flex-direction: column; min-height: 0; min-width: 0; border: 1px solid #999ba0; overflow: hidden; }
    .bar { display: flex; flex: none; height: 32px; background: #eaeaea; border-bottom: 2px solid #ccc; align-items: center; }
    .bar .step { width: 28px; display: grid; place-items: center; }
    .bar .page { width: 38px; margin: 0 4px 0 1px; background: #fff; }
    .bar .sep { width: 1px; height: 22px; background: #c5c5c5; }
    .bar .rows { padding: 0 14px; }
    .bar .pick { width: 46px; margin: 0 14px; }
    .right { display: flex; margin-left: auto; align-self: stretch; align-items: stretch; }
    .right .cell { display: flex; align-items: center; justify-content: center; width: 39px; border-left: 1px solid #c9c9c9; }
    .right .bare { border-left: 0; width: 38px; }
    .right .wide { width: 64px; }
    .right .last { width: 76px; justify-content: flex-start; padding-left: 4px; }
    .toggle { display: flex; border: 1px solid #b5b5b5; border-radius: 4px; overflow: hidden; height: 23px; width: 63px; }
    .toggle button { flex: 1; display: grid; place-items: center; }
    .toggle .on { background: #fff; border-right: 1px solid #b5b5b5; }
    .scroller { flex: 1; min-height: 0; position: relative; overflow: hidden; }
    table { table-layout: fixed; width: 100%; border-spacing: 1px; }
    .w1 { width: 33px; } .w2 { width: 65px; } .w3 { width: 74px; } .w4 { width: 137px; } .w5 { width: 438px; } .w6 { width: 140px; } .w7 { width: 65px; }
    th { height: 26px; padding: 0 0 1px 5px; text-align: left; background: #f5f5f5; border-bottom: 1px solid #ccc; border-right: 1px solid #ccc; white-space: nowrap; }
    td { height: 19px; padding: 0 0 0 5px; line-height: 14px; border-bottom: 1px solid #ccc; border-right: 1px solid #ccc; white-space: nowrap; }
    th:first-child, td:first-child { padding-left: 6px; }
    th:last-child { border-right: 0; }
    td:last-child { border: 0; }
    td a { color: #17598c; text-decoration: none; }
    .track { position: absolute; right: 0; top: 27px; bottom: 0; width: 17px; background: #f1f1f1; display: flex; flex-direction: column; align-items: center; justify-content: space-between; padding: 7px 2px; }
    .track i { border: 4px solid transparent; }
    .track .up { border-bottom-color: #999; border-top: 0; }
    .track .down { border-top-color: #555; border-bottom: 0; }
    .thumb { position: absolute; top: 17px; width: 13px; height: 41%; background: #c1c1c1; }

    .foot { display: flex; height: 28px; border: 1px solid #999ba0; align-items: stretch; }
    .foot button, .foot .group { display: flex; align-items: center; justify-content: center; gap: 3px; }
    .foot button { width: 39px; border-right: 1px solid #bbb; }
    .foot button + button { width: 35px; }
    .foot .copy { flex: 1; text-align: center; font: bold 12px/26px "Open Sans", Tahoma, sans-serif; }
    .foot .group { border-left: 1px solid #bbb; padding: 0 10px; gap: 11px; }
    .foot .status { padding: 0 13px 0 11px; }
    .pair { display: flex; align-items: center; gap: 4px; }
    .badge { min-width: 18px; height: 16px; border-radius: 8px; background: #777; color: #fff; text-align: center; line-height: 16px; }
    .badge.hot { background: #e8202c; }
    .foot .clock { padding: 0 20px; }

    .frame { position: absolute; left: 470px; top: 572px; width: 70px; bottom: 32px; border: 5px solid #ed1c24; pointer-events: none; }
    .note { position: absolute; left: 246px; top: 695px; width: 183px; height: 71px; padding: 13px 0 0 23px; border: 5px solid #ed1c24; color: #ed1c24; font: 13px/18px "Noto Sans", sans-serif; }
  `;

  render() {
    return html`
      <header class="top">
        <div class="brand">
          RASTREASUL
          <svg class="bird" viewBox="0 0 52 24" aria-hidden="true">
            <g fill="none" stroke="#24688f" stroke-width="1.500">
              <path d="M1 3q10 3 14 3 8 2 10 9M1 3q6 7 13 8l9 5M8 8q7 6 15 8M51 3q-10 3-14 3-8 2-10 9M51 3q-6 7-13 8l-9 5M44 8q-7 6-15 8" />
              <path d="M15 14q6 5 9 3M37 14q-6 5-9 3M18 18l6 4M34 18l-6 4" />
            </g>
            <path d="M26 10l3 4-1 5-2 3-2-3-1-5z" fill="#24688f" />
          </svg>
        </div>
        <nav class="nav">
          ${NAV.map(([i, t]) => html`<a href="#" class=${t === "Relatórios" ? "current" : ""}>${icon(i)}${t}</a>`)}
        </nav>
        <div class="tools">
          <button aria-label="Ferramentas">${icon("ruler")}</button>
          <button aria-label="Aplicativos">${icon("apps")}</button>
          <button class="narrow" aria-label="Mais">${icon("dots")}</button>
          <button class="narrow" aria-label="Entrar como">${icon("login")}</button>
          <button class="account">rastreasul</button>
        </div>
      </header>

      <div class="main">
        <aside class="side">
          <form class="form" @submit=${(e: Event) => e.preventDefault()}>
            <label for="model">Modelo:</label>
            <div class="pick"><select id="model"><option>Análise das Velocidades</option></select></div>
            <button type="button" class="tool" aria-label="Editar modelo">${icon("wrench", "small")}</button>
            <label for="unit">Objeto:</label>
            <div class="pick"><select id="unit"><option>ICU-3635</option></select></div>
            <button type="button" class="tool" aria-label="Editar objeto">${icon("wrench", "small")}</button>
            <div class="presets">
              <button type="button">Hoje</button><button type="button">Ontem</button><button type="button">Semana</button><button type="button">Mês</button>
            </div>
            <span></span>
            <label for="span">Intervalo:</label>
            <div class="pick"><select id="span"><option>Para os anteriores</option></select></div>
            <span></span>
            <div class="count">
              <button type="button" class="arrow back" aria-label="Menos"></button>
              <input class="number" aria-label="Quantidade" value="4" />
              <button type="button" class="arrow forth" aria-label="Mais"></button>
              <div class="pick"><select aria-label="Unidade de tempo"><option>dias</option></select></div>
            </div>
            <span></span>
            <label class="check"><input type="checkbox" />Incluindo atual</label>
            <span></span>
            <div class="actions">
              <button type="button" class="btn">Limpar</button><button class="btn go">Executar</button>
            </div>
          </form>
          <h2>Modelos de relatórios</h2>
          <h2 class="on">Resultado do Relatório</h2>
          <ul class="sections">
            ${SECTIONS.map((s, i) => html`<li><button class=${i === 1 ? "on" : ""}>${s}</button></li>`)}
          </ul>
        </aside>

        <div class="work">
          <section class="map">
            <svg class="canvas" viewBox="0 0 4431 1512" preserveAspectRatio="xMinYMin slice">${mapDrawing}</svg>
            <div class="controls">
              <button aria-label="Buscar">${icon("search", "small")}</button>
              <button aria-label="Visibilidade">${icon("eye", "small")}</button>
              <button aria-label="Camadas">${icon("map", "small")}</button>
              <div class="zoom">
                <button aria-label="Aproximar">${icon("plus", "small")}</button>
                <button aria-label="Afastar">${icon("minus", "small")}</button>
              </div>
              <input class="slider" type="range" min="0" max="100" value="43" aria-label="Zoom" />
            </div>
            <div class="maker">Google</div>
            <div class="scale"><div class="km">5 km</div><div class="mi">2 mi</div></div>
            <div class="coords">-28.866029° : -51.302575°</div>
            <div class="legal"><span>Map data ©2019 Google</span><a href="#">Terms of Use</a><a href="#">Report a map error</a></div>
          </section>

          <section class="report">
            <div class="bar">
              <button class="step" aria-label="Primeira">${icon("first", "small")}</button>
              <button class="step" aria-label="Anterior">${icon("prev", "small")}</button>
              <input class="number page" aria-label="Página" value="2" />
              <span>de 35</span>
              <button class="step" aria-label="Próxima">${icon("next", "small")}</button>
              <button class="step" aria-label="Última">${icon("last", "small")}</button>
              <span class="sep"></span>
              <span class="rows">Linhas de 51 até 100 de 1723</span>
              <span class="sep"></span>
              <div class="pick"><select aria-label="Linhas por página"><option>50</option></select></div>
              <span class="sep"></span>
              <div class="right">
                <button class="cell" aria-label="Relatório">${icon("list")}</button>
                <button class="cell" aria-label="PDF">${icon("pdf")}</button>
                <button class="cell bare" aria-label="Excel">${icon("excel")}</button>
                <button class="cell" aria-label="Exportar">${icon("export")}</button>
                <button class="cell" aria-label="Imprimir">${icon("print")}</button>
                <div class="cell wide"><button class="btn">Limpar</button></div>
                <div class="cell last">
                  <div class="toggle">
                    <button class="on" aria-label="Mapa">${icon("mapline")}</button>
                    <button aria-label="Dividir">${icon("split", "small")}</button>
                  </div>
                </div>
              </div>
            </div>
            <div class="scroller">
              <table>
                <colgroup>
                  <col class="w1" /><col class="w2" /><col class="w3" /><col class="w4" /><col class="w5" /><col class="w6" /><col class="w7" /><col />
                </colgroup>
                <thead>
                  <tr><th>№</th><th>Ignição*</th><th>Velocidade</th><th>Hora</th><th>Localização</th><th>Coordenadas</th><th>Motorista</th><th></th></tr>
                </thead>
                <tbody>
                  ${ROWS.map(
                    ([n, ign, speed, time, place, at]) => html`<tr>
                      <td>${n}</td><td>${ign}</td><td>${speed} km/h</td>
                      <td><a href="#">Quin 17/10/19 ${time}</a></td>
                      <td><a href="#">${place}</a></td>
                      <td><a href="#">${at}</a></td>
                      <td>-----</td><td></td>
                    </tr>`
                  )}
                  <tr><td></td><td></td><td></td><td></td><td></td><td></td><td></td><td></td></tr>
                </tbody>
              </table>
              <div class="track" aria-hidden="true"><i class="up"></i><span class="thumb"></span><i class="down"></i></div>
            </div>
          </section>
        </div>
      </div>

      <footer class="foot">
        <button aria-label="Painel">${icon("panel", "small")}</button>
        <button aria-label="Grade">${icon("grid")}</button>
        <div class="copy">© Rastreasul</div>
        <div class="group status">
          <span class="pair">${icon("card")}<span class="badge hot">8</span></span>
          <span class="pair">${icon("mail")}<span class="badge">0</span></span>
          <span class="pair">${icon("image")}<span class="badge">0</span></span>
        </div>
        <div class="group">${icon("cols")}</div>
        <div class="group clock">11:39:54 (-03)</div>
      </footer>

      <div class="frame"></div>
      <div class="note">Option to use just the<br />color of the sensor</div>
    `;
  }
}
